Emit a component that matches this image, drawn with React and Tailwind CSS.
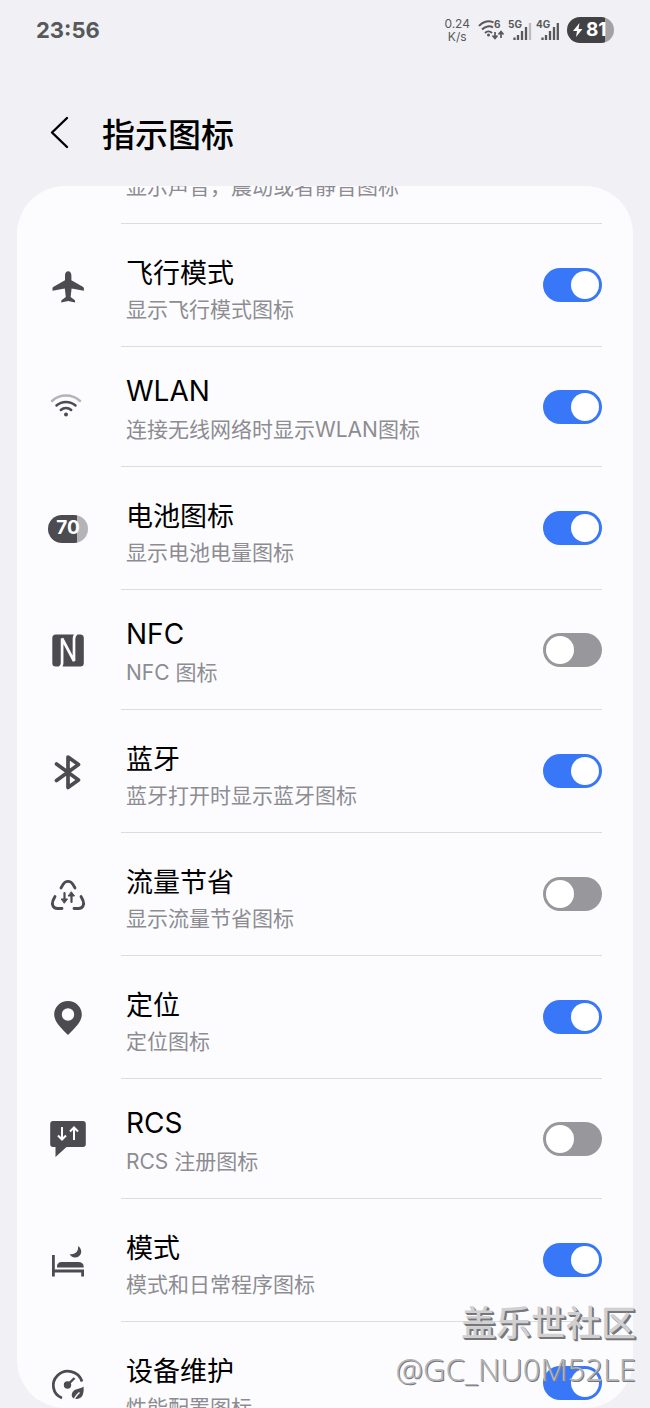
import React from 'react';

const AirplaneIcon = () => (
  <svg width="40" height="40" viewBox="0 0 40 40" fill="#4b4b50" aria-hidden="true">
    <path d="M20.2 5.2c2 0 3.2 2 3.2 4.2v4.8l11.4 6.5c.8.5 1.1 1 1.1 1.9v2.2l-12.3-2.2-1 8.3 4 3.2c.4.3.5.7.5 1.1v1.4l-6.9-1.5-6.9 1.5v-1.4c0-.4.1-.8.5-1.1l4-3.2-1-8.3-12.3 2.2v-2.2c0-.9.3-1.4 1.1-1.9L17 14.2V9.4c0-2.2 1.2-4.2 3.2-4.2z" />
  </svg>
);

const WifiIcon = () => (
  <svg width="40" height="40" viewBox="0 0 40 40" fill="none" strokeWidth="2.5" strokeLinecap="round" aria-hidden="true">
    <path d="M4 14C12 6.8 24 6.800 32 14" stroke="#b3b3b8" />
    <path d="M8.500 18.500c5.500-4.800 13.500-4.800 19 0" stroke="#4b4b50" />
    <path d="M12.800 23c3-2.600 7.400-2.600 10.400 0" stroke="#4b4b50" />
    <circle cx="18" cy="27.500" r="2" fill="#4b4b50" />
  </svg>
);

const BatteryIcon = () => (
  <div className="flex h-7 w-10 items-center justify-center rounded-full bg-[linear-gradient(90deg,#4b4b50_73%,#b3b3b8_73%)] text-[19px] font-bold text-white">
    70
  </div>
);

const NfcIcon = () => (
  <svg width="40" height="40" viewBox="0 0 40 40" aria-hidden="true">
    <rect x="4.300" y="4.500" width="31.500" height="32" rx="3.500" fill="#4b4b50" />
    <path d="M11.500 37.500c2-1 2.600-2.300 2.600-4.500V8.500L26 31V9c0-2.500.6-4 2.600-5.500" fill="none" stroke="#fcfcff" strokeWidth="2.700" strokeLinejoin="bevel" />
  </svg>
);

const BluetoothIcon = () => (
  <svg width="40" height="40" viewBox="0 0 40 40" fill="none" stroke="#4b4b50" strokeWidth="3.700" strokeLinecap="round" strokeLinejoin="round" aria-hidden="true">
    <path d="M8.500 12 30.500 28 20 35.500V5L30.500 12.500 8.500 28.500" />
  </svg>
);

const DataSaverIcon = () => (
  <svg width="40" height="40" viewBox="0 0 40 40" fill="none" stroke="#4b4b50" strokeWidth="2.800" strokeLinecap="round" strokeLinejoin="round" aria-hidden="true">
    <path d="M13 13l2-3.500c2.400-4.200 7.600-4.200 10 0l2 3.500" />
    <path d="M7 21.500l-2 4c-1.700 4 .2 8 4.500 8H14" />
    <path d="M33 21.500l2 4c1.700 4-.2 8-4.500 8H26" />
    <path d="M16.500 18v8M23.500 27v-8" strokeWidth="2.200" />
    <path d="M13.500 24h6l-3 4zM20.500 21h6l-3-4z" fill="#4b4b50" strokeWidth="1" />
  </svg>
);

const LocationIcon = () => (
  <svg width="40" height="40" viewBox="0 0 40 40" fill="#4b4b50" aria-hidden="true">
    <path fillRule="evenodd" d="M20 3c7.800 0 13.800 6 13.800 13.500 0 7-6.200 13-13.800 20.500C12.400 29.500 6.200 23.500 6.200 16.500 6.200 9 12.200 3 20 3zm0 7.300a6.200 6.200 0 100 12.400 6.200 6.200 0 000-12.400z" />
  </svg>
);

const RcsIcon = () => (
  <svg width="40" height="40" viewBox="0 0 40 40" aria-hidden="true">
    <path d="M5 2h30c1.700 0 2.800 1.100 2.800 2.800v20.400c0 1.700-1.100 2.800-2.800 2.800H18.500L7.500 38V28H5c-1.700 0-2.800-1.100-2.800-2.800V4.800C2.200 3.100 3.300 2 5 2z" fill="#4b4b50" />
    <path d="M14 8v12M10 16.500l4 4 4-4M26 21V9M22 12.500l4-4 4 4" fill="none" stroke="#fff" strokeWidth="2" />
  </svg>
);

const BedIcon = () => (
  <svg width="40" height="40" viewBox="0 0 40 40" fill="#4b4b50" aria-hidden="true">
    <path d="M4 14h2.800V28.500H36V35.500h-2.800v-4H6.800v4H4zM9 26.500v-1c0-2.800 2-4.500 4.500-4.500h17c3 0 5.200 1.500 5.200 4.500v1z" />
    <path d="M30 5c5.700 3.800 3.500 11.500-3 11.500-2.500 0-4.500-1.200-5.200-3.500 5.200 1 9-2.500 8.200-8z" />
  </svg>
);

const DeviceCareIcon = () => (
  <svg width="40" height="40" viewBox="0 0 40 40" fill="none" aria-hidden="true">
    <path d="M14 34C4.500 30.500 2.500 18.500 9.500 11.500c7.500-7.500 21-5 24.500 6" stroke="#4b4b50" strokeWidth="2.800" />
    <circle cx="19.500" cy="21" r="3.700" fill="#4b4b50" />
    <path d="M20 20.500l6.500-6.500" stroke="#4b4b50" strokeWidth="2.400" />
    <path d="M35.500 22.500c.8 7-1 12.500-7.500 12.500-5 0-5.500-5.500-2-8.500 2.500-2 6.500-1.500 9.500-4z" fill="#4b4b50" />
    <path d="M25.500 37.500c1-4 3-6.500 6-9" stroke="#fcfcff" strokeWidth="1.500" />
  </svg>
);

const SETTINGS = [
  { id: 'airplane', title: '飞行模式', desc: '显示飞行模式图标', icon: AirplaneIcon, on: true },
  { id: 'wlan', title: 'WLAN', desc: '连接无线网络时显示WLAN图标', icon: WifiIcon, on: true, latin: true },
  { id: 'battery', title: '电池图标', desc: '显示电池电量图标', icon: BatteryIcon, on: true },
  { id: 'nfc', title: 'NFC', desc: 'NFC 图标', icon: NfcIcon, on: false, latin: true },
  { id: 'bluetooth', title: '蓝牙', desc: '蓝牙打开时显示蓝牙图标', icon: BluetoothIcon, on: true },
  { id: 'saver', title: '流量节省', desc: '显示流量节省图标', icon: DataSaverIcon, on: false },
  { id: 'location', title: '定位', desc: '定位图标', icon: LocationIcon, on: true },
  { id: 'rcs', title: 'RCS', desc: 'RCS 注册图标', icon: RcsIcon, on: false, latin: true },
  { id: 'modes', title: '模式', desc: '模式和日常程序图标', icon: BedIcon, on: true },
  { id: 'care', title: '设备维护', desc: '性能配置图标', icon: DeviceCareIcon, on: true },
];

function SettingRow({ item }) {
  const Icon = item.icon;

  return (
    <li className="flex shrink-0 gap-0.5">
      <div className="flex w-[102px] shrink-0 items-center justify-center">
        <Icon />
      </div>
      <div className="mr-[31px] flex flex-1 items-center border-b border-[#dcdce0] pl-[5px]">
        <label htmlFor={item.id} className="flex-1 pt-[30px] pb-5">
          {/* latin titles sit higher and tighter than the CJK ones */}
          <span className={`block text-black ${item.latin ? 'mb-2 text-[28px] leading-[29px]' : 'text-[27px] leading-[40px]'}`}>{item.title}</span>
          <span className="block text-[21px] leading-8 text-[#8c8c91]">{item.desc}</span>
        </label>
        <input
          id={item.id}
          type="checkbox"
          role="switch"
          defaultChecked={item.on}
          className="h-[34px] w-[59px] shrink-0 appearance-none rounded-full bg-[#98979c] p-[3px] before:block before:size-7 before:rounded-full before:bg-white checked:bg-[#3777f8] checked:before:ml-auto"
        />
      </div>
    </li>
  );
}

function StatusBar() {
  return (
    <div className="flex h-[60px] shrink-0 items-center justify-between px-9 text-[#58585b]">
      <span className="text-[22px] font-bold">23:56</span>
      <div className="flex items-center gap-2">
        <div className="text-center text-xs leading-[13px]">
          <div>0.24</div>
          <div>K/s</div>
        </div>
        <svg width="81" height="26" viewBox="0 0 81 26" fill="none" stroke="#58585b" aria-hidden="true">
          {/* wifi 6 */}
          <path d="M1 9c4-5 11-6 14.500-3.500M4 12.500c3-3.500 8-4 11-2M7 16c2-2 5-2 7 0" strokeWidth="2" />
          <circle cx="10.500" cy="18" r="1.500" fill="#58585b" stroke="none" />
          <path d="M17 15v6M14.500 18.500l2.500 3 2.500-3M23 21v-6M20.500 17.500l2.500-3 2.500 3" strokeWidth="1.700" />
          <g fill="#58585b" stroke="none" fontSize="10" fontWeight="700">
            <text x="16" y="11">6</text>
            <text x="30" y="11">5G</text>
            <text x="58" y="11">4G</text>
          </g>
          <path d="M36.500 23v-2.500M40 23v-5M44 23v-9M48 23V10" strokeWidth="2.300" />
          <path d="M52 23V6" stroke="#bcbcc0" strokeWidth="2.300" />
          <path d="M64.500 23v-2.500M68 23v-5M72 23v-9M76 23V10M79.800 23V6" strokeWidth="2.300" />
        </svg>
        <div className="flex h-[26px] w-[47px] items-center gap-0.5 rounded-full bg-[linear-gradient(90deg,#424245_81%,#a2a2a6_81%)] pl-[5px] text-[19px] font-bold text-white">
          <svg width="12" height="16" viewBox="0 0 12 16" fill="#fff" aria-hidden="true">
            <path d="M7.500 1L1 9h4l-1 6 6.500-8h-4z" />
          </svg>
          81
        </div>
      </div>
    </div>
  );
}

export default function App() {
  return (
    <div className="relative flex h-screen flex-col overflow-hidden bg-[#f1f1f5] font-['Inter','Noto_Sans_CJK_SC',sans-serif]">
      <StatusBar />

      {/* HEADER */}
      <header className="flex h-[126px] shrink-0 items-center pt-5 pl-12">
        <button type="button" aria-label="返回">
          <svg width="24" height="36" viewBox="0 0 24 36" fill="none" stroke="#000" strokeWidth="2.400" strokeLinecap="round" strokeLinejoin="round">
            <path d="M19 3L4 17.500L19 32" />
          </svg>
        </button>
        <h1 className="pt-1 pl-[30px] text-[33px] leading-[48px] font-medium text-black">指示图标</h1>
      </header>

      {/* SETTINGS LIST */}
      <ul className="mx-[17px] flex min-h-0 flex-1 flex-col overflow-hidden rounded-[48px] bg-[#fcfcff]">
        <li className="-mt-4 mr-[31px] ml-[104px] shrink-0 border-b border-[#dcdce0] pb-5 pl-[5px] text-[21px] leading-[33px] text-[#8c8c91]">
          显示声音，震动或者静音图标
        </li>
        {SETTINGS.map(item => <SettingRow key={item.id} item={item} />)}
      </ul>

      {/* WATERMARK */}
      <div className="pointer-events-none absolute right-3.5 bottom-4 text-right text-[#d0d0d2] [text-shadow:1px_1px_0_#77777a,2px_2px_0_#77777a]">
        <div className="text-[35px] leading-[46px] font-medium">盖乐世社区</div>
        <div className="font-['Noto_Sans',sans-serif] text-[31px] leading-[46px] font-light text-[#b4b4b6] [text-shadow:1px_1px_0_#77777a]">@GC_NU0M52LE</div>
      </div>
    </div>
  );
}
